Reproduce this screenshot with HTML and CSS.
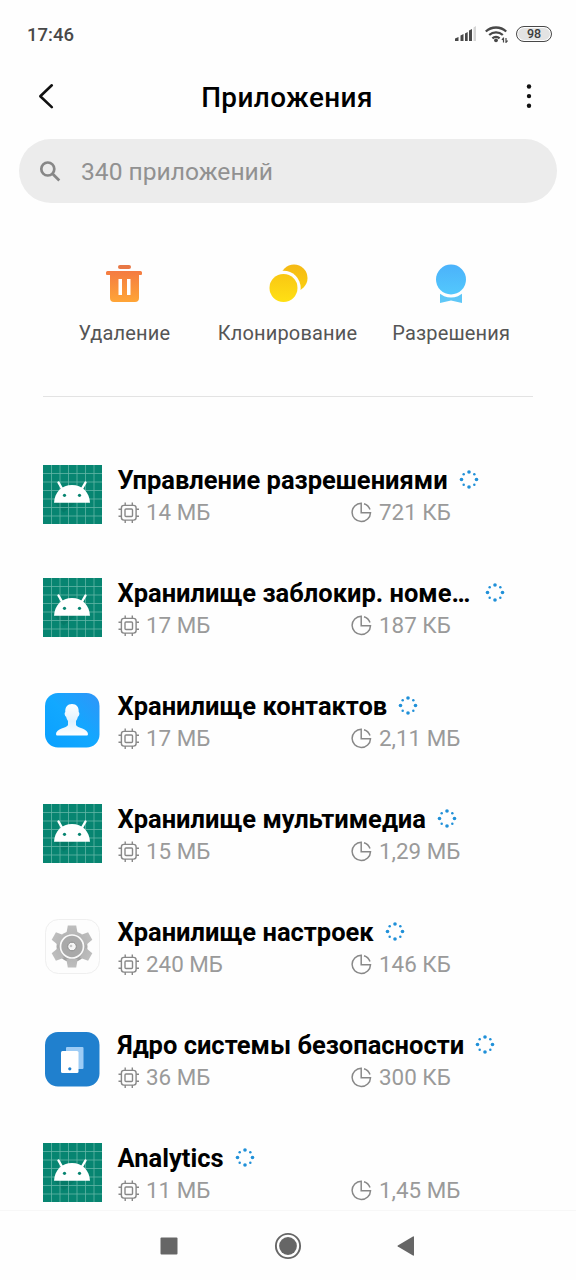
FILE: index.html
```html
<!DOCTYPE html>
<html lang="ru">
<head>
<meta charset="utf-8">
<title>Приложения</title>
<link rel="stylesheet" href="styles.css">
</head>
<body>
<svg class="defs" width="0" height="0" aria-hidden="true">
  <defs>
    <linearGradient id="g-trash" x1="0" y1="0" x2="0" y2="1"><stop offset="0" stop-color="#f47b42"/><stop offset="1" stop-color="#ffa536"/></linearGradient>
    <linearGradient id="g-back" x1="0" y1="0" x2="0" y2="1"><stop offset="0" stop-color="#f5b915"/><stop offset="1" stop-color="#fbd00f"/></linearGradient>
    <linearGradient id="g-front" x1="0" y1="0" x2="0" y2="1"><stop offset="0" stop-color="#f9c713"/><stop offset="1" stop-color="#ffe014"/></linearGradient>
    <linearGradient id="g-badge" x1="0" y1="0" x2="0" y2="1"><stop offset="0" stop-color="#4bb2fb"/><stop offset="1" stop-color="#53c8fc"/></linearGradient>
    <linearGradient id="g-contact" x1="0" y1="1" x2="1" y2="0"><stop offset="0" stop-color="#0aa0ff"/><stop offset=".5" stop-color="#12a8ff"/><stop offset="1" stop-color="#3095f8"/></linearGradient>
    <linearGradient id="g-person" x1="0" y1="0" x2="0" y2="1"><stop offset="0" stop-color="#fff"/><stop offset=".55" stop-color="#dff2ff"/><stop offset="1" stop-color="#fff"/></linearGradient>
    <linearGradient id="g-gear" gradientUnits="userSpaceOnUse" x1="0" y1="9" x2="0" y2="51"><stop offset="0" stop-color="#bdbdbd"/><stop offset="1" stop-color="#999"/></linearGradient>
    <path id="tooth" d="M23.300 17l1.500-8.500h8.400l1.500 8.500z"/>
  </defs>
  <symbol id="android" viewBox="0 0 59 59">
    <path fill="#078571" d="M0 0h59v59H0z"/>
    <path fill="#057562" opacity=".6" d="M11.500 38l9 9.500L32 38z"/>
    <path stroke="#62b5a6" stroke-width=".8" d="M8.500 0v59M17 0v59M25.500 0v59M34 0v59M42.500 0v59M51 0v59M0 8.500h59M0 17h59M0 25.500h59M0 34h59M0 42.500h59M0 51h59"/>
    <path fill="#fff" d="M11 37.800C11.500 27 19 20 29 20s17.500 7 18 17.800z"/>
    <path stroke="#fff" stroke-width="2.400" stroke-linecap="round" d="M15.500 17.500l4 7M42.500 17.500l-4 7"/>
    <circle cx="21.500" cy="30.300" r="1.600" fill="#078571"/><circle cx="36.500" cy="30.300" r="1.600" fill="#078571"/>
  </symbol>
  <symbol id="contacts" viewBox="0 0 59 59">
    <rect x="2" y="2" width="54.500" height="54.500" rx="13" fill="url(#g-contact)"/>
    <path fill="url(#g-person)" d="M29 13c4.600 0 7 3 6.700 8q1 .8.600 2.500-.4 1.800-1.400 2.300-.6 2.700-1.900 4.200v4c1 3 12 3.500 12 9q0 1.500-1.200 1.500H14.200q-1.200 0-1.200-1.500c0-5.500 11-6 12-9v-4q-1.300-1.500-1.900-4.200-1-.5-1.400-2.300-.4-1.700.6-2.500C22 16 24.400 13 29 13z"/>
  </symbol>
  <symbol id="settings" viewBox="0 0 59 59">
    <rect x="2.500" y="2.500" width="54" height="54" rx="13" fill="#fdfdfd" stroke="#efefef"/>
    <g fill="url(#g-gear)">
      <circle cx="29" cy="29.500" r="15.500"/>
      <use href="#tooth"/>
      <use href="#tooth" transform="rotate(60 29 29.500)"/>
      <use href="#tooth" transform="rotate(120 29 29.500)"/>
      <use href="#tooth" transform="rotate(180 29 29.500)"/>
      <use href="#tooth" transform="rotate(240 29 29.500)"/>
      <use href="#tooth" transform="rotate(300 29 29.500)"/>
    </g>
    <circle cx="29" cy="29.500" r="11.500" fill="#a9a9a9" stroke="#f9f9f9" stroke-width="1.700"/>
    <circle cx="29" cy="29.500" r="4.300" fill="#f5f5f5" stroke="#8d8d8d"/>
    <circle cx="28" cy="29" r="1.300" fill="#c5c5c5"/>
  </symbol>
  <symbol id="security" viewBox="0 0 59 59">
    <rect x="2" y="2" width="54.500" height="54.500" rx="13" fill="#2080ce"/>
    <rect x="23" y="17" width="17.500" height="22" rx="1" fill="#9dccf5"/>
    <rect x="18" y="21" width="17.500" height="22" rx="1.500" fill="#fff"/>
    <circle cx="26.800" cy="38.800" r="1.600" fill="#2080ce"/>
  </symbol>
  <symbol id="chip" viewBox="0 0 22 22">
    <g fill="none" stroke="#888" stroke-width="1.400"><rect x="3.400" y="3.400" width="14.700" height="14.700" rx="2.500"/><rect x="7" y="7" width="7.500" height="7.500" rx="1"/><path d="M7.200 3.400V.5M14.300 3.400V.5M7.200 21v-2.900M14.300 21v-2.900M3.400 7.200H.5M3.400 14.300H.5M21 7.200h-2.900M21 14.300h-2.900"/></g>
  </symbol>
  <symbol id="pie" viewBox="0 0 22 22">
    <g fill="none" stroke="#888" stroke-width="1.500"><path d="M10.200 1.200v9.500h9.300a9.200 9.200 0 1 1-9.300-9.500zM13 1.700a9.200 9.200 0 0 1 6 5.900"/></g>
  </symbol>
  <symbol id="spinner" viewBox="0 0 20 20">
    <g fill="#2090d8"><circle cx="10" cy="2" r="1.800"/><circle cx="10" cy="17" r="1.800"/><circle cx="2.500" cy="9.500" r="1.800"/><circle cx="17.500" cy="9.500" r="1.800"/><circle cx="4.700" cy="4.200" r="1.250"/><circle cx="15.300" cy="4.200" r="1.250"/><circle cx="4.700" cy="14.800" r="1.250"/><circle cx="15.300" cy="14.800" r="1.250"/></g>
  </symbol>
</svg>

<div class="screen">
  <div class="status">
    <span class="clock">17:46</span>
    <div class="status-icons">
      <svg width="22" height="16" viewBox="0 0 22 16"><path fill="#484848" d="M0 15v-2.500l3.500-1.500v4zM5.500 15V9.500L8.500 8v7zM10 15V7.500L12.700 6v9zM14 15V4.500L17 3v12z"/><path fill="#d6d6d6" d="M18.500 15V1.500L21 0v15z"/></svg>
      <svg class="wifi" width="24" height="19" viewBox="0 0 24 19"><g fill="none" stroke="#484848" stroke-width="2.300"><path d="M.8 6.500a15 15 0 0 1 20.400 0M4.200 10a10 10 0 0 1 13.600 0M7.400 13.300a5.400 5.400 0 0 1 7.200 0"/></g><circle cx="11" cy="15.300" r="1.900" fill="#484848"/><path fill="none" stroke="#484848" stroke-width="1.200" d="M18.500 12.500v5M18.700 13l-1.800 1.800M21 18v-5M20.800 17.500l1.800-1.800"/></svg>
      <span class="battery">98</span>
    </div>
  </div>

  <header class="header">
    <svg width="18" height="28" viewBox="0 0 18 28"><path fill="none" stroke="#111" stroke-width="2.600" stroke-linecap="round" stroke-linejoin="round" d="M15.800 2.300L4.300 13.200l11.500 10.900"/></svg>
    <h1 class="title">Приложения</h1>
    <svg width="18" height="28" viewBox="0 0 18 28"><g fill="#111"><circle cx="9" cy="3.500" r="2.200"/><circle cx="9" cy="13.100" r="2.200"/><circle cx="9" cy="22.700" r="2.200"/></g></svg>
  </header>

  <div class="search">
    <svg width="22" height="22" viewBox="0 0 22 22"><g fill="none" stroke="#878787" stroke-width="2.700"><circle cx="8.800" cy="9" r="6.500"/><path d="M13.300 13.500l7 7"/></g></svg>
    <span class="search-text">340 приложений</span>
  </div>

  <div class="actions">
    <div class="action action-delete">
      <svg width="38" height="40" viewBox="0 0 38 40"><rect x="13" y="1" width="13" height="4" rx="2" fill="#e87845"/><path fill="url(#g-trash)" d="M2.500 7h33q1.500 0 1.500 1.500V10q0 1-1 1h-2v23q0 4-4 4H9q-4 0-4-4V11H2q-1 0-1-1V8.500Q1 7 2.500 7z"/><path fill="#fff" d="M13.500 15H17v16h-3.500zM22 15h3.500v16H22z"/></svg>
      <span class="action-label">Удаление</span>
    </div>
    <div class="action action-clone">
      <svg width="40" height="40" viewBox="0 0 40 40"><circle cx="26" cy="14" r="13.500" fill="url(#g-back)"/><circle cx="15.500" cy="24" r="17.200" fill="#fefefe"/><circle cx="15.500" cy="24" r="14" fill="url(#g-front)"/></svg>
      <span class="action-label">Клонирование</span>
    </div>
    <div class="action action-permissions">
      <svg width="32" height="40" viewBox="0 0 32 40"><path fill="#5fc7f7" d="M5 27h22v12l-11-2.500L5 39z"/><circle cx="16" cy="15.500" r="18" fill="#fefefe"/><circle cx="16" cy="15.500" r="15" fill="url(#g-badge)"/></svg>
      <span class="action-label">Разрешения</span>
    </div>
  </div>

  <div class="divider"></div>

  <main class="list">
    <div class="app"><svg class="app-icon"><use href="#android"/></svg><div class="info"><div class="name"><span>Управление разрешениями</span><svg class="spin"><use href="#spinner"/></svg></div><div class="meta"><span class="stat"><svg class="ic"><use href="#chip"/></svg>14 МБ</span><span class="stat"><svg class="ic"><use href="#pie"/></svg>721 КБ</span></div></div></div>
    <div class="app"><svg class="app-icon"><use href="#android"/></svg><div class="info"><div class="name long"><span>Хранилище заблокир. номе…</span><svg class="spin"><use href="#spinner"/></svg></div><div class="meta"><span class="stat"><svg class="ic"><use href="#chip"/></svg>17 МБ</span><span class="stat"><svg class="ic"><use href="#pie"/></svg>187 КБ</span></div></div></div>
    <div class="app"><svg class="app-icon"><use href="#contacts"/></svg><div class="info"><div class="name"><span>Хранилище контактов</span><svg class="spin"><use href="#spinner"/></svg></div><div class="meta"><span class="stat"><svg class="ic"><use href="#chip"/></svg>17 МБ</span><span class="stat"><svg class="ic"><use href="#pie"/></svg>2,11 МБ</span></div></div></div>
    <div class="app"><svg class="app-icon"><use href="#android"/></svg><div class="info"><div class="name"><span>Хранилище мультимедиа</span><svg class="spin"><use href="#spinner"/></svg></div><div class="meta"><span class="stat"><svg class="ic"><use href="#chip"/></svg>15 МБ</span><span class="stat"><svg class="ic"><use href="#pie"/></svg>1,29 МБ</span></div></div></div>
    <div class="app"><svg class="app-icon"><use href="#settings"/></svg><div class="info"><div class="name"><span>Хранилище настроек</span><svg class="spin"><use href="#spinner"/></svg></div><div class="meta"><span class="stat"><svg class="ic"><use href="#chip"/></svg>240 МБ</span><span class="stat"><svg class="ic"><use href="#pie"/></svg>146 КБ</span></div></div></div>
    <div class="app"><svg class="app-icon"><use href="#security"/></svg><div class="info"><div class="name"><span>Ядро системы безопасности</span><svg class="spin"><use href="#spinner"/></svg></div><div class="meta"><span class="stat"><svg class="ic"><use href="#chip"/></svg>36 МБ</span><span class="stat"><svg class="ic"><use href="#pie"/></svg>300 КБ</span></div></div></div>
    <div class="app"><svg class="app-icon"><use href="#android"/></svg><div class="info"><div class="name"><span>Analytics</span><svg class="spin"><use href="#spinner"/></svg></div><div class="meta"><span class="stat"><svg class="ic"><use href="#chip"/></svg>11 МБ</span><span class="stat"><svg class="ic"><use href="#pie"/></svg>1,45 МБ</span></div></div></div>
  </main>

  <nav class="nav">
    <svg width="18" height="18" viewBox="0 0 18 18"><rect x=".5" y=".5" width="17" height="17" rx="1" fill="#666"/></svg>
    <svg width="28" height="28" viewBox="0 0 28 28"><circle cx="14" cy="14" r="12.100" fill="none" stroke="#666" stroke-width="1.900"/><circle cx="14" cy="14" r="8.900" fill="#666"/></svg>
    <svg width="18" height="20" viewBox="0 0 18 20"><path fill="#666" d="M16 .5q1-.5 1 .5v18q0 1-1 .5L.8 10.500q-.8-.5 0-1z"/></svg>
  </nav>
</div>
</body>
</html>
```
FILE: styles.css
```css
* { box-sizing: border-box; }
body { margin: 0; background: #fefefe; font-family: Roboto, "Noto Sans", sans-serif; color: #000; }
svg { display: block; flex: none; }
.defs { position: absolute; }
.screen { width: 576px; height: 1280px; display: flex; flex-direction: column; overflow: hidden; }

.status { height: 68px; flex: none; display: flex; align-items: center; justify-content: space-between; padding: 0 24px 0 27px; }
.clock { padding-top: 1px; font-size: 18.500px; font-weight: 500; color: #484848; }
.status-icons { display: flex; align-items: center; }
.wifi { margin: 0 7px 0 8px; }
.battery { width: 36px; height: 16px; border: 1.900px solid #484848; border-radius: 8px; background: #e3e3e3; box-shadow: inset 0 0 0 1px #fefefe; color: #3c3c3c; font-size: 12.500px; font-weight: 500; line-height: 14px; text-align: center; }

.header { height: 57px; flex: none; display: flex; align-items: center; justify-content: space-between; padding: 0 38px 0 36px; }
.title { margin: 0; padding-top: 2px; font-size: 27.900px; font-weight: 500; letter-spacing: .4px; line-height: 32px; }

.search { height: 64px; flex: none; margin: 14px 19px 0; border-radius: 32px; background: #ececec; display: flex; align-items: center; gap: 20px; padding-left: 20px; }
.search-text { padding-top: 2px; font-size: 24.600px; color: #919191; line-height: 32px; }

.actions { height: 193px; flex: none; display: flex; padding: 61px 43px 0; }
.action { display: flex; flex-direction: column; align-items: center; gap: 15px; }
.action-delete { width: 163px; }
.action-clone { width: 164px; }
.action-permissions { width: 164px; }
.action-label { font-size: 20px; line-height: 28px; color: #555; white-space: nowrap; letter-spacing: .16px; }

.divider { height: 1px; flex: none; margin: 0 43px; background: #e3e3e3; }

.list { flex: 1; min-height: 0; overflow: hidden; padding: 41px 42px 0 43px; }
.app { height: 113px; display: flex; align-items: center; gap: 15.500px; }
.app-icon { width: 59px; height: 59px; margin-bottom: 1px; }
.info { flex: 1; min-width: 0; padding-top: 4px; }
.name { display: flex; align-items: center; gap: 11px; height: 32px; font-size: 25.500px; font-weight: 700; line-height: 32px; white-space: nowrap; }
.long { gap: 15px; }
.spin { width: 20px; height: 20px; }
.meta { display: grid; grid-template-columns: 233px 1fr; height: 33px; }
.stat { display: flex; align-items: center; gap: 6.500px; font-size: 22.400px; color: #9a9a9a; line-height: 33px; }
.ic { width: 22px; height: 22px; }

.nav { height: 70px; flex: none; border-top: 1px solid #f7f7f7; display: flex; align-items: center; justify-content: space-between; padding: 0 161px 0 160px; }
```
